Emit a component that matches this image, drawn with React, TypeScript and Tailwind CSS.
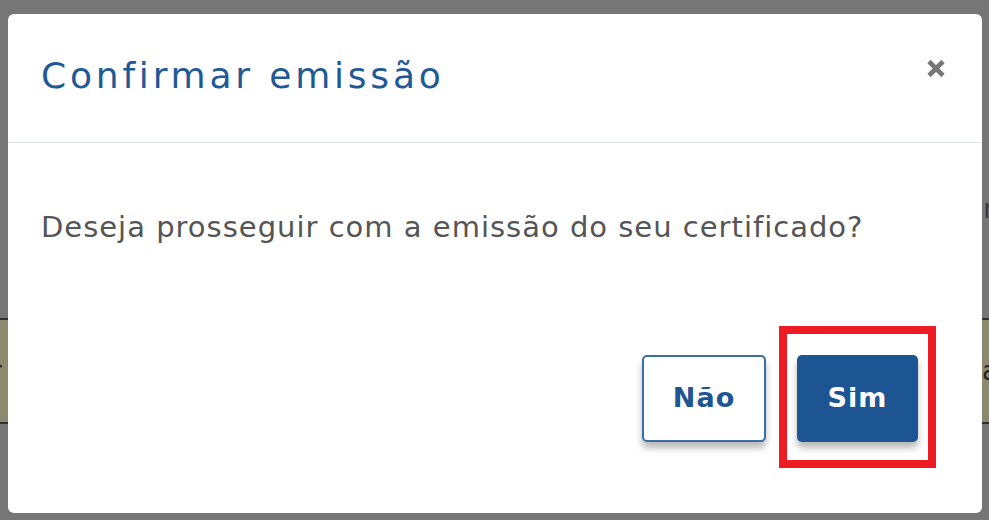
import React from 'react';

const CloseIcon = () => (
  <svg width="20" height="19" viewBox="0 0 20 19" className="block">
    <path d="M3 2.5 L17 16.5 M17 2.5 L3 16.5" stroke="#777777" strokeWidth="4.6" strokeLinecap="butt" fill="none" />
  </svg>
);

const App = () => {
  return (
    <div className="relative w-[989px] h-[520px] overflow-hidden bg-[#767676]" style={{ fontFamily: '"DejaVu Sans", "Liberation Sans", sans-serif' }}>
      {/* page behind the backdrop */}
      <div className="flex justify-end items-start h-[318px] pt-[196px]">
        <span className="text-[26px] leading-none text-[#3a3a3a] -mr-[5px]">r</span>
      </div>
      <div className="h-[106px] bg-[#8d8970] border-y-2 border-[#2f2f2f] flex items-center justify-between">
        <span className="text-[26px] leading-none text-[#222] -ml-[9px]">r</span>
        <span className="text-[26px] leading-none text-[#222] -mr-[9px]">a</span>
      </div>

      {/* modal */}
      <div className="absolute left-[8px] top-[14px] w-[974px] h-[499px] bg-white rounded-[6px] flex flex-col">
        <div className="h-[129px] border-b border-[#e2e6ea] flex items-start justify-between pl-[33px] pr-[36px]">
          <h1 className="pt-[42px] text-[36px] leading-[40px] tracking-[3.8px] text-[#1f5a96] font-normal">
            Confirmar emissão
          </h1>
          <button className="mt-[45px]">
            <CloseIcon />
          </button>
        </div>

        <div className="pl-[33px] pt-[67px]">
          <p className="text-[29px] leading-[34px] tracking-[1px] text-[#555555]">
            Deseja prosseguir com a emissão do seu certificado?
          </p>
        </div>

        <div className="flex justify-end items-start pt-[82px] pr-[46px] gap-[13px]">
          <button className="mt-[29px] w-[124px] h-[87px] bg-white border-2 border-[#3b6da3] rounded-[5px] text-[27px] font-bold tracking-[1px] text-[#1f5591] shadow-[0_6px_7px_rgba(0,0,0,0.28)]">
            Não
          </button>
          <div className="border-[8px] border-[#ed1c24] pt-[21px] pb-[18px] px-[10px]">
            <button className="w-[121px] h-[87px] bg-[#1d5592] rounded-[5px] text-[27px] font-bold tracking-[1px] text-white shadow-[0_6px_7px_rgba(0,0,0,0.28)]">
              Sim
            </button>
          </div>
        </div>
      </div>
    </div>
  );
};

export default App;
